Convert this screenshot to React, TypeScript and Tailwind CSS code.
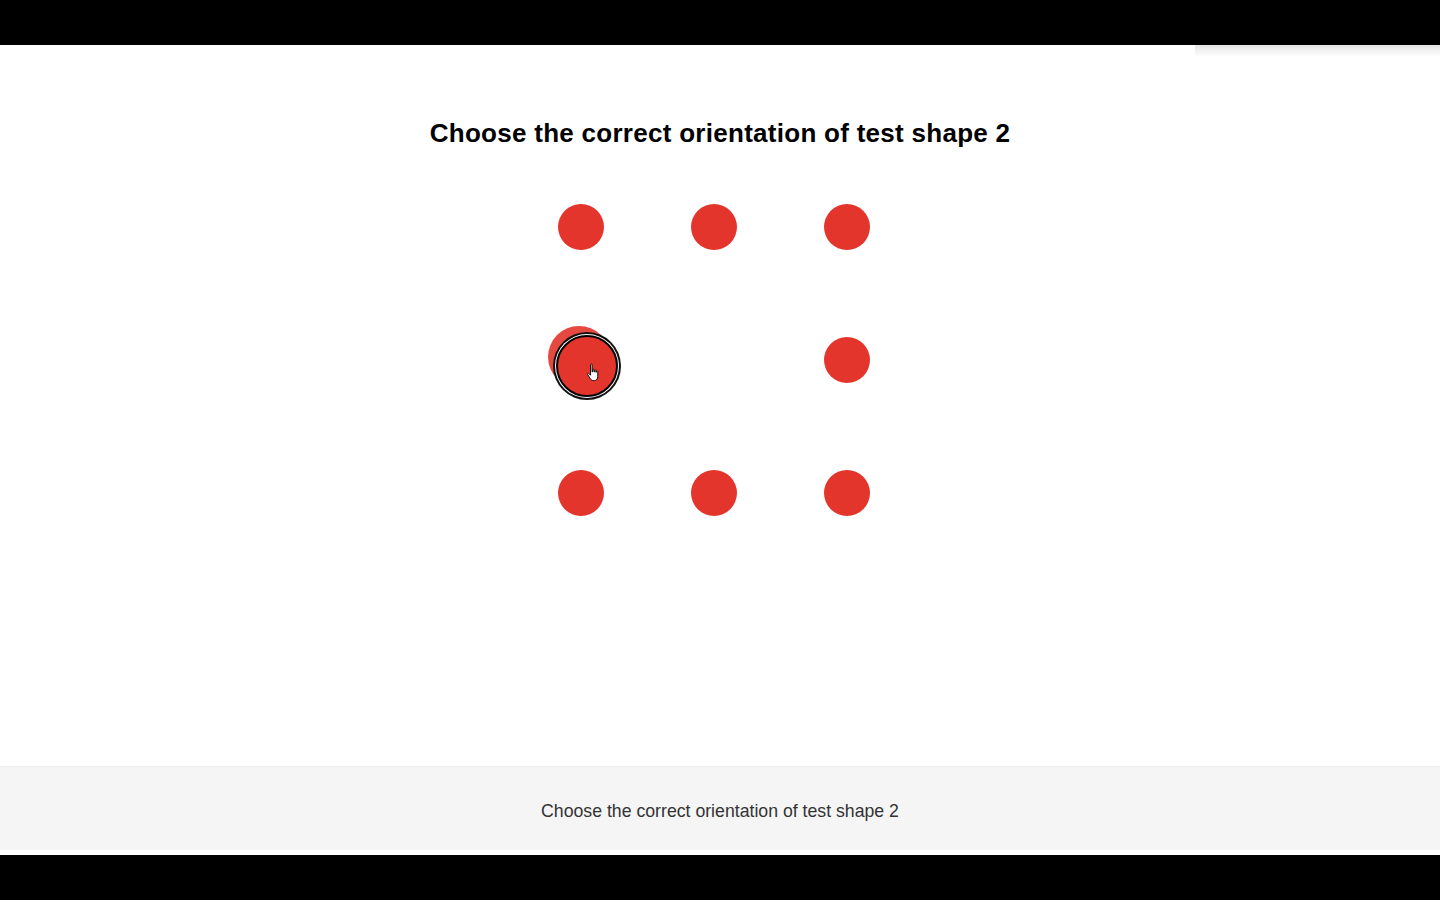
import React from "react";

const slots = [0, 1, 2, 3, 4, 5, 6, 7, 8];

function Hand() {
  return (
    <svg width="18" height="20" viewBox="0 0 16 18" className="absolute left-[28px] top-[26px]">
      <path
        d="M4 1.5c0-.8 1.4-.8 1.4 0V8h.4V6.2c0-.8 1.3-.8 1.3 0V8h.4V6.8c0-.8 1.3-.8 1.3 0V8.3h.4V7.6c0-.8 1.3-.8 1.3 0v4.6c0 2-1.2 3.6-3 3.6H6.4c-1.2 0-2-.8-2.7-1.8L1.3 10.2c-.5-.7.4-1.5 1-.9L4 11V1.5z"
        fill="#fff"
        stroke="#111"
        strokeWidth="0.9"
        strokeLinejoin="round"
      />
    </svg>
  );
}

export default function App() {
  return (
    <div className="flex flex-col w-[1440px] h-[900px] bg-white font-['Liberation_Sans',Arial,sans-serif] overflow-hidden relative">
      <div className="h-[45px] bg-black shrink-0" />
      <div className="absolute right-0 top-[45px] w-[245px] h-[12px] bg-gradient-to-b from-[#dedede] to-white opacity-80" />

      <main className="flex-1 flex flex-col items-center">
        <h1 className="mt-[73px] text-[26px] leading-[30px] font-bold text-black tracking-[0.28px]">
          Choose the correct orientation of test shape 2
        </h1>

        <div className="mt-[12px] pr-[12px] flex justify-center w-full">
          <div className="grid grid-cols-[repeat(3,133px)] grid-rows-[repeat(3,133px)]">
            {slots.map((i) => (
              <div key={i} className="flex items-center justify-center">
                {i === 3 ? (
                  <div className="relative w-[46px] h-[46px]">
                    <div className="absolute left-[-10px] top-[-11px] w-[62px] h-[62px] rounded-full bg-[#e3352b] opacity-90" />
                    <div className="absolute left-[-2px] top-[-2px] w-[62px] h-[62px] rounded-full bg-[#e3352b] border-2 border-black shadow-[0_0_0_1px_#fff,0_0_0_3px_#111]">
                      <Hand />
                    </div>
                  </div>
                ) : i === 4 ? null : (
                  <div className="w-[46px] h-[46px] rounded-full bg-[#e3352b]" />
                )}
              </div>
            ))}
          </div>
        </div>
      </main>

      <footer className="h-[84px] shrink-0 bg-[#f5f5f5] border-t border-[#ececec] flex items-center justify-center">
        <p className="text-[17.7px] text-[#333] mt-[6px]">Choose the correct orientation of test shape 2</p>
      </footer>
      <div className="h-[5px] bg-white shrink-0" />
      <div className="h-[45px] bg-black shrink-0" />
    </div>
  );
}
